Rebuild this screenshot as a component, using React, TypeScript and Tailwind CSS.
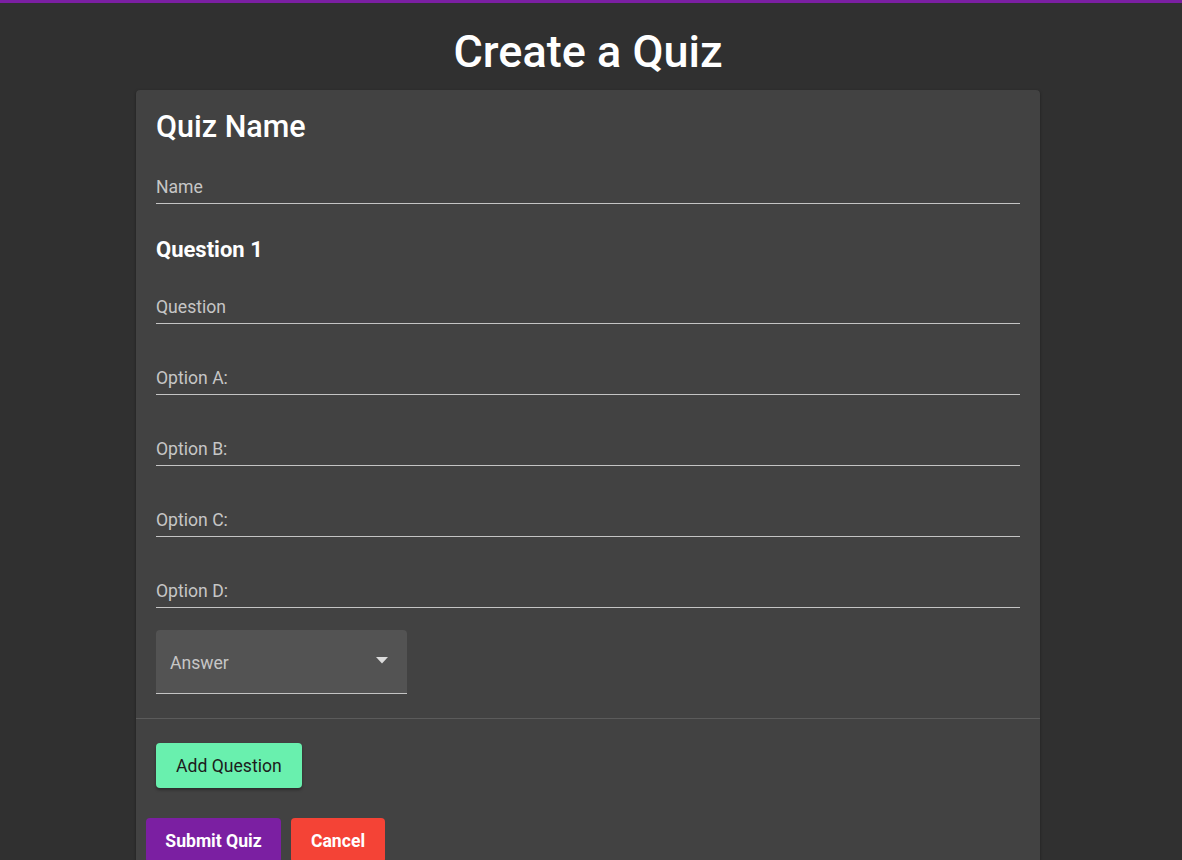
import React, { useState } from 'react';

const font = { fontFamily: 'Roboto, "Noto Sans", sans-serif' };

interface FieldProps {
  label: string;
  className?: string;
}

const Field: React.FC<FieldProps> = ({ label, className = '' }) => (
  <div className={`h-[44px] flex items-end border-b border-[#c4c4c4] ${className}`}>
    <span className="pb-[6px] text-[17.6px] leading-[20px] text-[#c6c6c6]">{label}</span>
  </div>
);

export default function App() {
  const [answer] = useState('');

  return (
    <div className="min-h-[860px] bg-[#303030] text-white" style={font}>
      {/* Top accent bar */}
      <div className="h-[3px] bg-[#7b1fa2]" />

      <div className="pr-[6px]">
        <div className="h-[87px] flex items-center justify-center pt-[10px]">
          <h1 className="text-[45px] leading-[52px] font-medium text-white">Create a Quiz</h1>
        </div>

        <div className="w-[904px] mx-auto bg-[#424242] rounded-t-[4px] shadow-[0_1px_3px_rgba(0,0,0,0.4)] pb-[20px]">
          <div className="px-[20px] pt-[18px]">
            <h2 className="text-[30.5px] leading-[38px] font-medium">Quiz Name</h2>
            <Field label="Name" className="mt-[14px]" />

            <h3 className="mt-[32px] text-[22px] leading-[28px] font-bold">Question 1</h3>
            <Field label="Question" className="mt-[16px]" />
            <Field label="Option A:" className="mt-[27px]" />
            <Field label="Option B:" className="mt-[27px]" />
            <Field label="Option C:" className="mt-[27px]" />
            <Field label="Option D:" className="mt-[27px]" />

            {/* Answer select (filled) */}
            <div className="mt-[22px] w-[251px] h-[64px] bg-[#535353] rounded-t-[4px] border-b border-[#c4c4c4] flex items-center justify-between pl-[14px] pr-[19px]">
              <span className="text-[17.6px] leading-[20px] text-[#c6c6c6] pt-[3px]">{answer || 'Answer'}</span>
              <svg width="12" height="7" viewBox="0 0 12 7" className="-mt-[2px]">
                <path d="M0 0 L6 6.5 L12 0 Z" fill="#dcdcdc" />
              </svg>
            </div>
          </div>

          <div className="mt-[24px] h-px bg-[#5b5b5b]" />

          <div className="px-[20px] pt-[24px]">
            <button
              type="button"
              className="h-[45px] px-[20px] pt-[2px] rounded-[4px] bg-[#69f0ae] text-[#1c1c1c] text-[17.6px] shadow-[0_2px_3px_rgba(0,0,0,0.35)]"
            >
              Add Question
            </button>
          </div>

          <div className="px-[10px] pt-[30px] flex gap-[10px]">
            <button
              type="button"
              className="h-[45px] w-[135px] pt-[2px] rounded-[4px] bg-[#7b1fa2] text-white text-[17.6px] font-bold"
            >
              Submit Quiz
            </button>
            <button
              type="button"
              className="h-[45px] w-[94px] pt-[2px] rounded-[4px] bg-[#f44336] text-white text-[17.6px] font-bold"
            >
              Cancel
            </button>
          </div>
        </div>
      </div>
    </div>
  );
}
